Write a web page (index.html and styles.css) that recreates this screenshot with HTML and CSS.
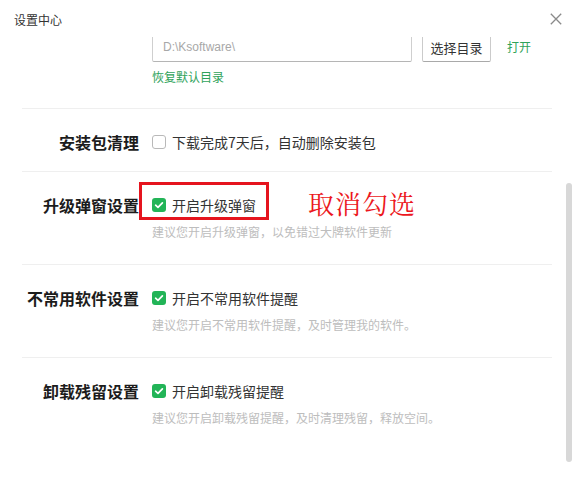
FILE: index.html
```html
<!DOCTYPE html>
<html lang="zh-CN">
<head>
<meta charset="utf-8">
<title>设置中心</title>
<link rel="stylesheet" href="styles.css">
</head>
<body>
<div class="dialog">
  <header class="hd">
    <span class="title">设置中心</span>
    <svg class="close" width="12" height="12" viewBox="0 0 12 12"><path d="M0.8 0.8L11.2 11.2M11.2 0.8L0.8 11.2" stroke="#8a8a8a" stroke-width="1.3" fill="none"/></svg>
  </header>
  <div class="body">
    <div class="viewport">
      <div class="content">
        <section class="row dir">
          <div class="label"></div>
          <div class="field">
            <div class="dirline">
              <div class="input"><span class="path">D:\Ksoftware\</span></div>
              <button class="btn"><span class="btext">选择目录</span></button>
              <a class="link open">打开</a>
            </div>
            <a class="link reset">恢复默认目录</a>
          </div>
        </section>
        <section class="row">
          <div class="label">安装包清理</div>
          <div class="field">
            <label class="check"><span class="box"></span><span class="ctext">下载完成7天后，自动删除安装包</span></label>
          </div>
        </section>
        <section class="row annotated">
          <div class="label">升级弹窗设置</div>
          <div class="field">
            <label class="check"><span class="box on"><svg width="14" height="14" viewBox="0 0 14 14"><path d="M3.6 7.2L6 9.4L10.4 4.9" stroke="#fff" stroke-width="1.7" fill="none" stroke-linecap="round" stroke-linejoin="round"/></svg></span><span class="ctext">开启升级弹窗</span></label>
            <div class="desc">建议您开启升级弹窗，以免错过大牌软件更新</div>
          </div>
          <div class="mark"></div>
          <div class="note">取消勾选</div>
        </section>
        <section class="row">
          <div class="label">不常用软件设置</div>
          <div class="field">
            <label class="check"><span class="box on"><svg width="14" height="14" viewBox="0 0 14 14"><path d="M3.6 7.2L6 9.4L10.4 4.9" stroke="#fff" stroke-width="1.7" fill="none" stroke-linecap="round" stroke-linejoin="round"/></svg></span><span class="ctext">开启不常用软件提醒</span></label>
            <div class="desc">建议您开启不常用软件提醒，及时管理我的软件。</div>
          </div>
        </section>
        <section class="row last">
          <div class="label">卸载残留设置</div>
          <div class="field">
            <label class="check"><span class="box on"><svg width="14" height="14" viewBox="0 0 14 14"><path d="M3.6 7.2L6 9.4L10.4 4.9" stroke="#fff" stroke-width="1.7" fill="none" stroke-linecap="round" stroke-linejoin="round"/></svg></span><span class="ctext">开启卸载残留提醒</span></label>
            <div class="desc">建议您开启卸载残留提醒，及时清理残留，释放空间。</div>
          </div>
        </section>
      </div>
    </div>
    <div class="track"><div class="thumb"></div></div>
  </div>
</div>
</body>
</html>
```
FILE: styles.css
```css
html, body {
  margin: 0;
  padding: 0;
  background: #fff;
}
body {
  font-family: "Noto Sans CJK SC", "Liberation Sans", sans-serif;
  color: #333;
}
.dialog {
  width: 577px;
  height: 481px;
  background: #fff;
  display: flex;
  flex-direction: column;
  overflow: hidden;
}
.hd {
  height: 37px;
  flex: none;
  display: flex;
  align-items: flex-start;
  justify-content: space-between;
  padding: 0 15px 0 14px;
}
.title {
  font-size: 12px;
  line-height: 16px;
  margin-top: 12px;
  color: #333;
}
.close {
  margin-top: 13px;
}
.body {
  flex: 1;
  display: flex;
  padding-left: 22px;
  min-height: 0;
}
.viewport {
  width: 530px;
  height: 444px;
  overflow: hidden;
}
.content {
  margin-top: -29px;
}
.row {
  position: relative;
  display: grid;
  grid-template-columns: 117px 1fr;
  column-gap: 13px;
  padding: 24px 0 20px;
  border-bottom: 1px solid #efefef;
}
.row.last {
  border-bottom: none;
}
.row.dir {
  padding-bottom: 23px;
}
.label {
  text-align: right;
  font-size: 16px;
  line-height: 18px;
  font-weight: 700;
  color: #1c1c1c;
  white-space: nowrap;
}
.field {
  display: flex;
  flex-direction: column;
  align-items: flex-start;
}
.dirline {
  display: flex;
  align-items: flex-start;
}
.input {
  box-sizing: border-box;
  width: 260px;
  height: 30px;
  border: 1px solid #cfcfcf;
  border-top-color: #fff;
  border-bottom-color: #b5b5b5;
  border-radius: 2px;
  padding: 8px 0 0 10px;
}
.path {
  display: block;
  font-family: "Liberation Sans", sans-serif;
  font-size: 12px;
  line-height: 13px;
  color: #a8a8a8;
}
.btn {
  box-sizing: border-box;
  margin-left: 10px;
  width: 69px;
  height: 30px;
  border: 1px solid #cbcbcb;
  border-top-color: #fff;
  border-bottom-color: #a9a9a9;
  border-radius: 2px;
  background: #fff;
  padding: 8px 0 0;
  display: flex;
  justify-content: center;
  align-items: flex-start;
}
.btext {
  font-family: "Noto Sans CJK SC", sans-serif;
  font-size: 13px;
  line-height: 13px;
  color: #333;
}
.link {
  color: #2fa35a;
  font-size: 12px;
  line-height: 16px;
}
.open {
  margin-left: 16px;
  margin-top: 9px;
  line-height: 12px;
}
.reset {
  margin-top: 7px;
}
.check {
  display: flex;
  align-items: center;
  height: 18px;
}
.box {
  box-sizing: border-box;
  width: 14px;
  height: 14px;
  border: 1px solid #b9b9b9;
  border-radius: 3px;
  background: #fff;
  display: flex;
}
.box.on {
  border: none;
  background: #22b457;
}
.ctext {
  margin-left: 6px;
  font-size: 14px;
  line-height: 18px;
  color: #333;
}
.desc {
  margin-top: 10px;
  margin-bottom: 4px;
  font-size: 12px;
  line-height: 16px;
  color: #bdbdbd;
}
.mark {
  position: absolute;
  left: 117px;
  top: 10px;
  width: 130px;
  height: 38px;
  box-sizing: border-box;
  border: 3px solid #e5141e;
}
.note {
  position: absolute;
  left: 286px;
  top: 16px;
  font-family: "Noto Serif CJK SC", "Noto Sans CJK SC", serif;
  font-size: 26px;
  line-height: 30px;
  color: #ec1620;
  letter-spacing: 1px;
}
.track {
  margin-left: 14px;
  width: 6px;
}
.thumb {
  margin-top: 146px;
  width: 6px;
  height: 279px;
  background: #d8d8d8;
  border-radius: 3px;
}
```
